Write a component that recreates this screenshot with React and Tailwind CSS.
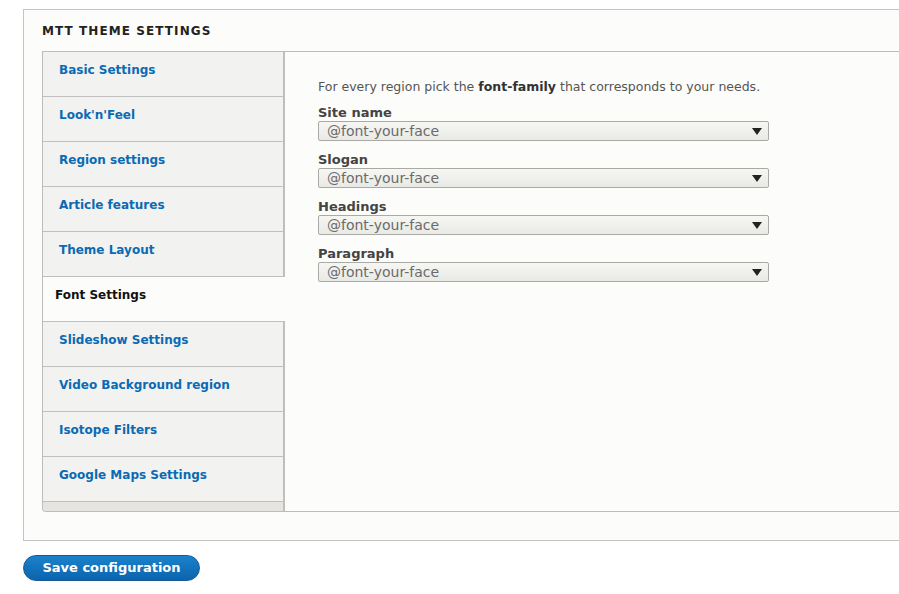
import React from "react";

const tabs = [
  "Basic Settings",
  "Look'n'Feel",
  "Region settings",
  "Article features",
  "Theme Layout",
  "Font Settings",
  "Slideshow Settings",
  "Video Background region",
  "Isotope Filters",
  "Google Maps Settings",
];

const fields = ["Site name", "Slogan", "Headings", "Paragraph"];

const FontSelect = () => (
  <div className="relative h-[20px] w-[451px] rounded-[2px] border border-[#a9a9a6] bg-gradient-to-b from-[#f6f6f3] to-[#e9e9e5]">
    <span className="absolute left-[8px] top-[0px] text-[14px] leading-[18px] text-[#6b6b6b]">
      @font-your-face
    </span>
    <svg
      className="absolute right-[6px] top-[6px]"
      width="10"
      height="7"
      viewBox="0 0 10 7"
    >
      <path d="M0 0 L10 0 L5 7 Z" fill="#222" />
    </svg>
  </div>
);

export default function App() {
  const active = "Font Settings";

  return (
    <div
      className="h-[594px] w-[899px] overflow-hidden bg-white pl-[23px] pt-[9px]"
      style={{ fontFamily: "'DejaVu Sans', 'Liberation Sans', sans-serif" }}
    >
      {/* fieldset */}
      <div className="h-[532px] w-[900px] border border-r-0 border-[#c4c4c4] bg-[#fcfcfa]">
        <div className="pl-[18px] pt-[13px] text-[12px] font-bold uppercase leading-[16px] tracking-[0.09em] text-[#222]">
          MTT Theme Settings
        </div>

        {/* vertical tabs */}
        <div className="ml-[18px] mt-[12px] flex h-[461px] rounded-bl-[4px] border border-r-0 border-[#bcbcbc] bg-[#fcfcfa]">
          <div className="flex w-[242px] shrink-0 flex-col rounded-bl-[4px] bg-[#e5e4e0]">
            {tabs.map((tab) =>
              tab === active ? (
                <div
                  key={tab}
                  className="relative z-10 h-[45px] shrink-0 border-b border-[#c0c0c0] bg-[#fcfcfa] pl-[12px] pt-[10px] text-[12px] font-bold leading-[16px] text-[#111]"
                >
                  {tab}
                </div>
              ) : (
                <div
                  key={tab}
                  className="h-[45px] shrink-0 border-b border-r-[2px] border-[#bfbfbf] bg-[#f2f2f0] pl-[16px] pt-[10px] text-[12px] font-bold leading-[16px] text-[#0a6ab4]"
                >
                  {tab}
                </div>
              )
            )}
            <div className="flex-1 border-r-[2px] border-[#bfbfbf]" />
          </div>

          <div className="flex-1 pl-[33px] pt-[27px]">
            <p className="text-[12.5px] leading-[16px] text-[#555]">
              For every region pick the{" "}
              <span className="font-bold text-[#333]">font-family</span> that
              corresponds to your needs.
            </p>
            <div className="mt-[9px] flex flex-col gap-[10px]">
              {fields.map((f) => (
                <div key={f}>
                  <div className="text-[13px] font-bold leading-[17px] text-[#444]">
                    {f}
                  </div>
                  <FontSelect />
                </div>
              ))}
            </div>
          </div>
        </div>
      </div>

      <button className="mt-[14px] h-[26px] w-[177px] rounded-full border border-[#1a5a94] bg-gradient-to-b from-[#1b82cc] to-[#0a64ad] text-[13px] font-bold leading-[22px] text-white">
        Save configuration
      </button>
    </div>
  );
}
